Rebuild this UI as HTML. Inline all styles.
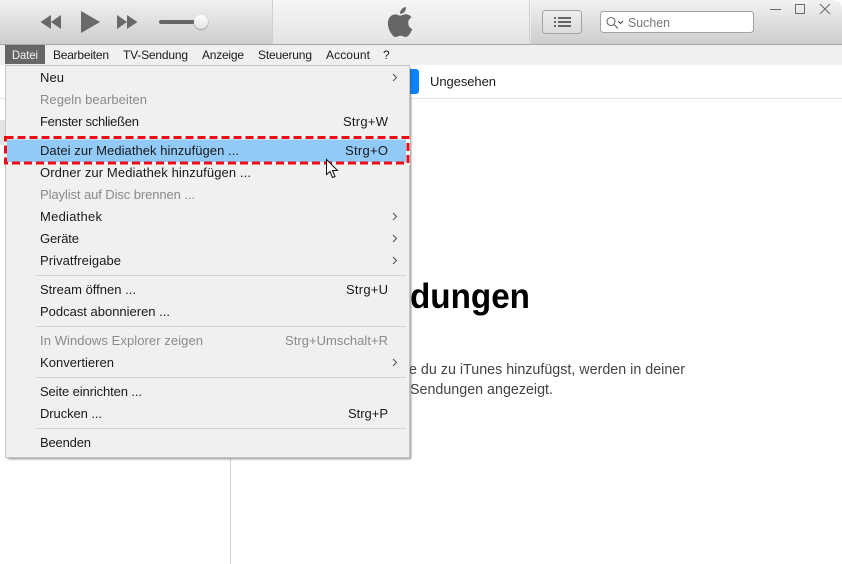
<!DOCTYPE html>
<html><head><meta charset="utf-8"><style>
html,body{margin:0;padding:0;background:#fff;width:842px;height:564px;overflow:hidden}
svg{display:block}
text{font-family:"Liberation Sans",sans-serif;font-size:13px;fill:#1a1a1a}
.g{fill:#8a8a8a}
</style></head><body>
<svg width="842" height="564" viewBox="0 0 842 564" xmlns="http://www.w3.org/2000/svg">
<defs>
<linearGradient id="tb" x1="0" y1="0" x2="0" y2="1"><stop offset="0" stop-color="#f1f1f1"/><stop offset="1" stop-color="#cdcdcd"/></linearGradient>
<linearGradient id="tc" x1="0" y1="0" x2="0" y2="1"><stop offset="0" stop-color="#f6f6f6"/><stop offset="1" stop-color="#e3e3e3"/></linearGradient>
<linearGradient id="btn" x1="0" y1="0" x2="0" y2="1"><stop offset="0" stop-color="#eeeeee"/><stop offset="1" stop-color="#dcdcdc"/></linearGradient>
<linearGradient id="knob" x1="0" y1="0" x2="0" y2="1"><stop offset="0" stop-color="#ffffff"/><stop offset="1" stop-color="#e4e4e4"/></linearGradient>
<filter id="sh" x="-5%" y="-5%" width="110%" height="110%"><feGaussianBlur stdDeviation="1"/></filter>
</defs>
<rect width="842" height="564" fill="#fff"/>
<!-- title bar -->
<rect width="842" height="44" fill="url(#tb)"/>
<rect x="272" width="259" height="44" fill="url(#tc)"/>
<rect x="272" width="1" height="44" fill="#d0d0d0"/>
<rect x="529" width="1" height="44" fill="#d0d0d0"/>
<rect y="44" width="842" height="1" fill="#a8a8a8"/>
<path d="M832 0H842V10Q842 0 832 0Z" fill="#fff"/>
<!-- transport -->
<g fill="#696969">
<path d="M40.500 22 51 15V29Z"/><path d="M51 22 61 15V29Z"/>
<path d="M81 11 100 22 81 33Z"/>
<path d="M117 15 127 22 117 29Z"/><path d="M127 15 137.500 22 127 29Z"/>
</g>
<rect x="159" y="20" width="38" height="4" rx="2" fill="#666"/>
<circle cx="201" cy="22.700" r="7.500" fill="#999" opacity=".7"/>
<circle cx="201" cy="22" r="7" fill="url(#knob)"/>
<!-- apple -->
<path transform="translate(382.100 4) scale(1.5)" fill="#666" d="M18.71 19.5c-.83 1.24-1.71 2.45-3.05 2.47-1.34.03-1.77-.79-3.29-.79-1.53 0-2 .77-3.27.82-1.31.05-2.3-1.32-3.14-2.53C4.25 17 2.94 12.45 4.7 9.39c.87-1.52 2.43-2.48 4.12-2.51 1.28-.02 2.5.87 3.29.87.78 0 2.26-1.07 3.81-.91.65.03 2.47.26 3.64 1.98-.09.06-2.17 1.28-2.15 3.81.03 3.02 2.65 4.03 2.68 4.04-.03.07-.42 1.44-1.38 2.83M13 3.500c.73-.83 1.94-1.46 2.94-1.5.13 1.17-.34 2.35-1.04 3.19-.69.85-1.83 1.51-2.95 1.42-.15-1.15.41-2.35 1.05-3.11z"/>
<!-- list button -->
<rect x="542.500" y="10.500" width="39" height="23" rx="3" fill="url(#btn)" stroke="#a3a3a3"/>
<g fill="#666"><rect x="554" y="17" width="2" height="2"/><rect x="554" y="21" width="2" height="2"/><rect x="554" y="25" width="2" height="2"/><rect x="558" y="17" width="13" height="2"/><rect x="558" y="21" width="13" height="2"/><rect x="558" y="25" width="13" height="2"/></g>
<!-- search -->
<rect x="600.500" y="11.500" width="153" height="21" rx="3" fill="#fff" stroke="#a3a3a3"/>
<circle cx="611" cy="21.500" r="4" fill="none" stroke="#666" stroke-width="1.100"/>
<path d="M614 24.500 618 28.500" stroke="#666" stroke-width="1.200"/>
<path d="M618 21 620.500 23.500 623 21" fill="none" stroke="#555" stroke-width="1.200"/>
<text x="628" y="27" textLength="42" lengthAdjust="spacingAndGlyphs" style="fill:#777">Suchen</text>
<!-- window controls -->
<g stroke="#6a6a6a" stroke-width="1" fill="none">
<path d="M770 9.500H781"/>
<rect x="795.500" y="4.500" width="9" height="9"/>
<path d="M820 4 830 14M830 4 820 14"/>
</g>
<!-- menu bar -->
<rect y="45" width="842" height="20" fill="#f0f0f0"/>
<rect x="5" y="45" width="40" height="19" fill="#676767"/>
<text x="12" y="59" textLength="26" lengthAdjust="spacingAndGlyphs" style="font-size:12px;fill:#f4f4f4">Datei</text>
<g style="font-size:12px">
<text x="53" y="59" textLength="56" style="font-size:12px">Bearbeiten</text>
<text x="123" y="59" textLength="65" style="font-size:12px">TV-Sendung</text>
<text x="202" y="59" textLength="42" style="font-size:12px">Anzeige</text>
<text x="258" y="59" textLength="54" style="font-size:12px">Steuerung</text>
<text x="326" y="59" textLength="44" style="font-size:12px">Account</text>
<text x="383" y="59" style="font-size:12px">?</text>
</g>
<!-- content -->
<rect x="0" y="98" width="5" height="1" fill="#e3e3e3"/>
<rect x="0" y="120" width="5" height="25" fill="#e4e4e4"/>
<rect x="230" y="99" width="1" height="465" fill="#d0d0d0"/>
<rect x="405" y="69" width="14" height="25" rx="3" fill="#0a84ff"/>
<rect x="409" y="98" width="433" height="1" fill="#e3e3e3"/>
<text x="430" y="86" textLength="66" style="font-size:13px">Ungesehen</text>
<text x="410" y="308" textLength="120" lengthAdjust="spacingAndGlyphs" style="font-size:35px;font-weight:bold;fill:#000">dungen</text>
<text x="409" y="374" textLength="276" lengthAdjust="spacingAndGlyphs" style="font-size:14.5px;fill:#444">e du zu iTunes hinzufügst, werden in deiner</text>
<text x="410" y="394" textLength="143" lengthAdjust="spacingAndGlyphs" style="font-size:14.5px;fill:#444">Sendungen angezeigt.</text>
<!-- menu -->
<rect x="8" y="68" width="403" height="391" fill="#555" opacity=".7" filter="url(#sh)"/>
<rect x="5.500" y="65.500" width="404" height="392" fill="#f0f0f0" stroke="#c4c4c4"/>
<g fill="#d4d4d4">
<rect x="36" y="275" width="370" height="1"/>
<rect x="36" y="326" width="370" height="1"/>
<rect x="36" y="377" width="370" height="1"/>
<rect x="36" y="428" width="370" height="1"/>
</g>
<!-- highlight -->
<rect x="4" y="136" width="406" height="29" fill="#f6f6f6"/>
<rect x="7" y="139.500" width="399" height="22.500" fill="#91c9f7"/>
<rect x="5.500" y="137.500" width="402.500" height="25.500" fill="none" stroke="#f00a14" stroke-width="3" stroke-dasharray="8 4"/>
<text x="40" y="82" textLength="24">Neu</text>
<text class="g" x="40" y="104" textLength="107">Regeln bearbeiten</text>
<text x="40" y="126" textLength="99">Fenster schließen</text>
<text x="40" y="155" textLength="199">Datei zur Mediathek hinzufügen ...</text>
<text x="40" y="177" textLength="211">Ordner zur Mediathek hinzufügen ...</text>
<text class="g" x="40" y="199" textLength="155">Playlist auf Disc brennen ...</text>
<text x="40" y="221" textLength="62">Mediathek</text>
<text x="40" y="243" textLength="39">Geräte</text>
<text x="40" y="265" textLength="81">Privatfreigabe</text>
<text x="40" y="294" textLength="96">Stream öffnen ...</text>
<text x="40" y="316" textLength="130">Podcast abonnieren ...</text>
<text class="g" x="40" y="345" textLength="163">In Windows Explorer zeigen</text>
<text x="40" y="367" textLength="74">Konvertieren</text>
<text x="40" y="396" textLength="102">Seite einrichten ...</text>
<text x="40" y="418" textLength="62">Drucken ...</text>
<text x="40" y="447" textLength="51">Beenden</text>
<text x="343" y="126" textLength="45">Strg+W</text>
<text x="345" y="155" textLength="43">Strg+O</text>
<text x="346" y="294" textLength="42">Strg+U</text>
<text class="g" x="285" y="345" textLength="103">Strg+Umschalt+R</text>
<text x="348" y="418" textLength="40">Strg+P</text>
<g fill="none" stroke="#555" stroke-width="1.100">
<path d="M393 74 396.500 77.500 393 81"/>
<path d="M393 213 396.500 216.500 393 220"/>
<path d="M393 235 396.500 238.500 393 242"/>
<path d="M393 257 396.500 260.500 393 264"/>
<path d="M393 359 396.500 362.500 393 366"/>
</g>
<!-- cursor -->
<path d="M326.500 159.500V174.500L330 171.500 332.500 177.500 335 176.500 332.500 170.500H337.500Z" fill="#fff" stroke="#111" stroke-width="1"/>
</svg>
</body></html>
